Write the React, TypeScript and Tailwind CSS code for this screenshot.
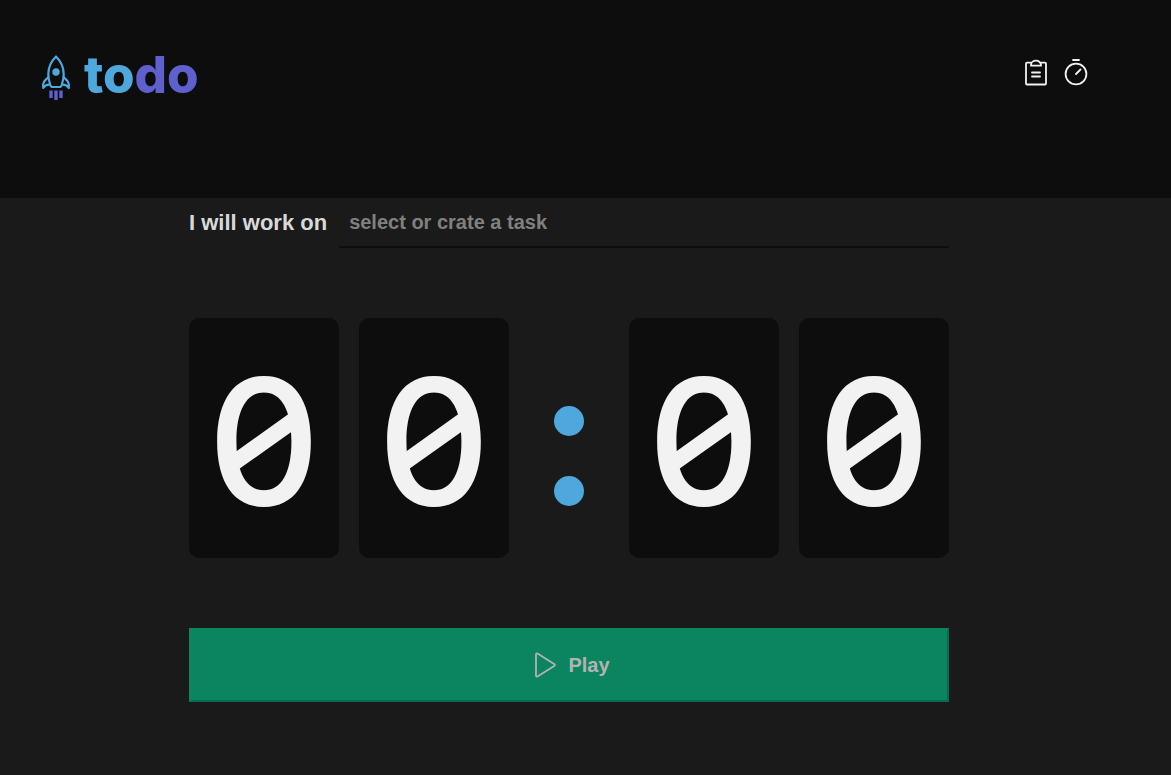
import type { ReactNode } from "react";

function Rocket() {
  return (
    <svg viewBox="0 0 28 46" className="h-[46px] w-7" fill="none" aria-hidden="true">
      <g stroke="#4ea8de" strokeWidth="2.200" strokeLinejoin="round" strokeLinecap="round">
        <path d="M14 1.500C10 5.500 6.300 12 6.300 19c0 3.500.8 7 1.700 9.800M14 1.500C18 5.500 21.700 12 21.700 19c0 3.500-.8 7-1.700 9.800" />
        <path d="M6.200 22C4.500 24.500 1.200 26 1.200 29v4c1.600-2.500 3.800-3.600 6.800-3.200l1.500 2.200h9l1.500-2.200c3-.4 5.200.7 6.800 3.200v-4c0-3-3.300-4.500-5-7" />
      </g>
      <circle cx="14" cy="17" r="3.700" fill="#4ea8de" />
      <path d="M9 35.500v7.500M14 35.500v9.500M19 35.500v7.500" stroke="#5e60ce" strokeWidth="3.400" />
    </svg>
  );
}

function Icon({ children }: { children: ReactNode }) {
  return (
    <svg
      viewBox="0 0 32 32"
      className="size-8 shrink-0"
      fill="none"
      stroke="currentColor"
      strokeWidth="1.800"
      strokeLinecap="round"
      strokeLinejoin="round"
      aria-hidden="true"
    >
      {children}
    </svg>
  );
}

function Digit({ value }: { value: number }) {
  return (
    <span className="relative flex h-60 min-w-0 flex-[150] items-center justify-center rounded-[10px] bg-[#0d0d0d] pt-1.5 font-['Inter',sans-serif] text-[175px] leading-none font-medium text-[#f2f2f2]">
      {value}
      {value === 0 && (
        <svg viewBox="0 0 150 240" className="absolute inset-0 size-full" aria-hidden="true">
          <path d="M38 140 110 88.500v20L38 159.500Z" fill="#f2f2f2" />
        </svg>
      )}
    </span>
  );
}

export default function App() {
  return (
    <div className="min-h-screen bg-[#1a1a1a] font-['Liberation_Sans',sans-serif] font-bold">
      <header className="flex h-[198px] items-start justify-between bg-[#0d0d0d] pt-[50px] pr-[79px] pl-[42px]">
        <a href="#home" aria-label="todo" className="flex items-start gap-3.5">
          <span className="pt-[5px]">
            <Rocket />
          </span>
          <span className="pt-px font-['Inter',sans-serif] text-[51px] leading-12 font-extrabold text-[#4ea8de]">
            to<span className="text-[#5e60ce]">do</span>
          </span>
        </a>
        <nav className="flex gap-2 pt-1.5 text-[#f2f2f2]">
          <a href="#tasks" aria-label="Tasks">
            <Icon>
              <path d="M11 6.700H7a1 1 0 0 0-1 1v19.800a1 1 0 0 0 1 1h18a1 1 0 0 0 1-1V7.700a1 1 0 0 0-1-1h-4" />
              <path d="M11 9.700V9a5 4.300 0 0 1 10 0v.7ZM12 16.500h8M12 20.500h8" />
            </Icon>
          </a>
          <a href="#timer" aria-label="Timer">
            <Icon>
              <circle cx="16" cy="18" r="10.400" />
              <path d="M16 18l4.500-4.500M13 4h6" />
            </Icon>
          </a>
        </nav>
      </header>
      <main className="pr-[33px]">
        <form className="mx-auto max-w-[760px]">
          <div className="flex items-center gap-3">
            <label htmlFor="task" className="text-[22px] leading-8 text-[#d9d9d9]">
              I will work on
            </label>
            <input
              id="task"
              type="text"
              placeholder="select or crate a task"
              className="h-[50px] min-w-0 flex-1 border-b-2 border-[#0d0d0d] bg-transparent px-2.5 text-xl text-[#d9d9d9] outline-none placeholder:text-[#808080]"
            />
          </div>
          <div className="mt-[70px] flex gap-5" role="timer">
            <Digit value={0} />
            <Digit value={0} />
            <span className="flex min-w-0 flex-[80] flex-col items-center justify-center gap-10 pt-9">
              <span className="size-[30px] rounded-full bg-[#4ea8de]" />
              <span className="size-[30px] rounded-full bg-[#4ea8de]" />
            </span>
            <Digit value={0} />
            <Digit value={0} />
          </div>
          <button
            type="button"
            className="mt-[70px] flex h-[74px] w-full items-center justify-center gap-2 border-2 border-t-[#0f8460] border-r-[#0b6b4e] border-b-[#0b6b4e] border-l-[#0f8460] bg-[#0b8460] text-xl text-[#b3b3b3]"
          >
            <Icon>
              <path d="M8 5.300v21.400a1 1 0 0 0 1.500.8l17-10.700a1 1 0 0 0 0-1.600l-17-10.700a1 1 0 0 0-1.500.8Z" />
            </Icon>
            Play
          </button>
        </form>
      </main>
    </div>
  );
}
